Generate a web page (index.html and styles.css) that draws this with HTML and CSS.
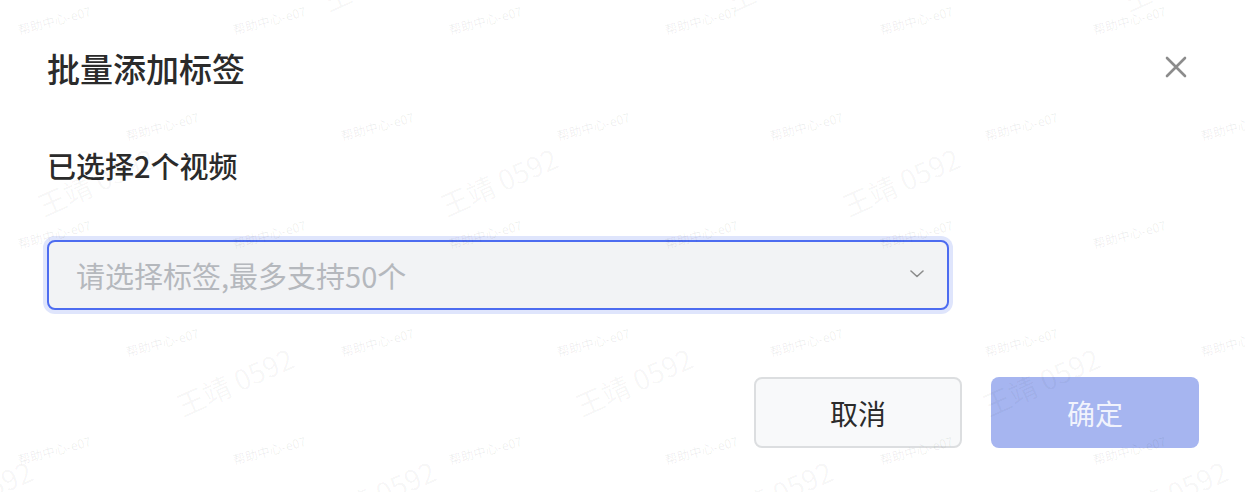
FILE: index.html
```html
<!DOCTYPE html>
<html lang="zh-CN">
<head>
<meta charset="utf-8">
<title>批量添加标签</title>
<link rel="stylesheet" href="styles.css">
</head>
<body>
<div class="dialog">
  <div class="dialog-header">
    <h2 class="dialog-title">批量添加标签</h2>
    <button class="close-btn" type="button" aria-label="关闭">
      <svg width="22" height="22" viewBox="0 0 22 22"><path d="M2 2 L20 20 M20 2 L2 20" stroke="#8c8c8c" stroke-width="2.6" stroke-linecap="round" fill="none"/></svg>
    </button>
  </div>
  <div class="dialog-body">
    <p class="selected-count">已选择2个视频</p>
    <div class="select">
      <span class="select-placeholder">请选择标签,最多支持50个</span>
      <svg class="select-arrow" width="14" height="8" viewBox="0 0 14 8"><path d="M1 1 L7 6.5 L13 1" stroke="#8c8c8c" stroke-width="1.6" fill="none" stroke-linecap="round" stroke-linejoin="round"/></svg>
    </div>
  </div>
  <div class="dialog-footer">
    <button class="btn btn-cancel" type="button">取消</button>
    <button class="btn btn-primary" type="button" disabled>确定</button>
  </div>
</div>

<div class="watermarks" aria-hidden="true">
  <span class="wm-s" style="left:20px;top:23px">帮助中心-e07</span>
  <span class="wm-s" style="left:235px;top:23px">帮助中心-e07</span>
  <span class="wm-s" style="left:451px;top:23px">帮助中心-e07</span>
  <span class="wm-s" style="left:667px;top:23px">帮助中心-e07</span>
  <span class="wm-s" style="left:882px;top:23px">帮助中心-e07</span>
  <span class="wm-s" style="left:1095px;top:23px">帮助中心-e07</span>

  <span class="wm-s" style="left:128px;top:129px">帮助中心-e07</span>
  <span class="wm-s" style="left:343px;top:129px">帮助中心-e07</span>
  <span class="wm-s" style="left:559px;top:129px">帮助中心-e07</span>
  <span class="wm-s" style="left:772px;top:129px">帮助中心-e07</span>
  <span class="wm-s" style="left:987px;top:129px">帮助中心-e07</span>
  <span class="wm-s" style="left:1203px;top:129px">帮助中心-e07</span>

  <span class="wm-s" style="left:20px;top:237px">帮助中心-e07</span>
  <span class="wm-s" style="left:235px;top:237px">帮助中心-e07</span>
  <span class="wm-s" style="left:451px;top:237px">帮助中心-e07</span>
  <span class="wm-s" style="left:667px;top:237px">帮助中心-e07</span>
  <span class="wm-s" style="left:882px;top:237px">帮助中心-e07</span>
  <span class="wm-s" style="left:1095px;top:237px">帮助中心-e07</span>

  <span class="wm-s" style="left:128px;top:345px">帮助中心-e07</span>
  <span class="wm-s" style="left:343px;top:345px">帮助中心-e07</span>
  <span class="wm-s" style="left:559px;top:345px">帮助中心-e07</span>
  <span class="wm-s" style="left:772px;top:345px">帮助中心-e07</span>
  <span class="wm-s" style="left:987px;top:345px">帮助中心-e07</span>
  <span class="wm-s" style="left:1203px;top:345px">帮助中心-e07</span>

  <span class="wm-s" style="left:20px;top:453px">帮助中心-e07</span>
  <span class="wm-s" style="left:235px;top:453px">帮助中心-e07</span>
  <span class="wm-s" style="left:451px;top:453px">帮助中心-e07</span>
  <span class="wm-s" style="left:667px;top:453px">帮助中心-e07</span>
  <span class="wm-s" style="left:882px;top:453px">帮助中心-e07</span>
  <span class="wm-s" style="left:1095px;top:453px">帮助中心-e07</span>

  <span class="wm-l" style="left:330px;top:-15px">王靖 0592</span>
  <span class="wm-l" style="left:734px;top:-15px">王靖 0592</span>
  <span class="wm-l" style="left:1130px;top:-15px">王靖 0592</span>

  <span class="wm-l" style="left:45px;top:190px">王靖 0592</span>
  <span class="wm-l" style="left:448px;top:190px">王靖 0592</span>
  <span class="wm-l" style="left:850px;top:190px">王靖 0592</span>

  <span class="wm-l" style="left:184px;top:390px">王靖 0592</span>
  <span class="wm-l" style="left:583px;top:390px">王靖 0592</span>
  <span class="wm-l" style="left:990px;top:390px">王靖 0592</span>

  <span class="wm-l" style="left:-77px;top:503px">王靖 0592</span>
  <span class="wm-l" style="left:326px;top:503px">王靖 0592</span>
  <span class="wm-l" style="left:723px;top:503px">王靖 0592</span>
  <span class="wm-l" style="left:1118px;top:503px">王靖 0592</span>
</div>
</body>
</html>
```

FILE: styles.css
```css
* {
  box-sizing: border-box;
}

html, body {
  margin: 0;
  padding: 0;
  background: #ffffff;
}

body {
  font-family: "Noto Sans CJK SC", "Noto Sans", "Liberation Sans", sans-serif;
  color: #2b2b2b;
  width: 1245px;
  height: 492px;
  overflow: hidden;
  position: relative;
}

.dialog {
  padding: 46px 46px 0 47px;
}

.dialog-header {
  display: flex;
  align-items: center;
  justify-content: space-between;
  height: 44px;
}

.dialog-title {
  margin: 0;
  font-size: 33px;
  line-height: 44px;
  font-weight: 500;
  color: #2b2b2b;
}

.close-btn {
  width: 22px;
  height: 22px;
  padding: 0;
  margin: -2px 12px 0 0;
  border: none;
  background: transparent;
  display: flex;
  align-items: center;
  justify-content: center;
  cursor: pointer;
}

.dialog-body {
  display: flex;
  flex-direction: column;
}

.selected-count {
  margin: 55px 0 0 0;
  font-size: 29px;
  line-height: 40px;
  font-weight: 500;
  color: #2b2b2b;
}

.select {
  margin-top: 55px;
  width: 902px;
  height: 70px;
  border: 2px solid #4d6cf0;
  border-radius: 8px;
  background: #f2f3f5;
  box-shadow: 0 0 0 4px #dfe5fc;
  display: flex;
  align-items: center;
  justify-content: space-between;
  padding: 0 23px 0 27px;
}

.select-placeholder {
  font-size: 29px;
  line-height: 40px;
  color: #b5b8bd;
}

.select-arrow {
  margin-top: -2px;
}

.dialog-footer {
  display: flex;
  justify-content: flex-end;
  gap: 29px;
  margin-top: 67px;
}

.btn {
  width: 208px;
  height: 71px;
  border-radius: 8px;
  font-family: inherit;
  font-size: 28px;
  line-height: 40px;
  padding: 0;
  cursor: pointer;
}

.btn-cancel {
  background: #f8f9fa;
  border: 2px solid #dcdee0;
  color: #2b2b2b;
}

.btn-primary {
  background: #a6b5f0;
  border: none;
  color: rgba(255, 255, 255, 0.85);
}

.watermarks {
  position: absolute;
  inset: 0;
  overflow: hidden;
  pointer-events: none;
  z-index: 10;
}

.wm-s,
.wm-l {
  position: absolute;
  white-space: nowrap;
  transform-origin: 0 100%;
  font-family: "Noto Sans CJK SC", "Liberation Sans", sans-serif;
}

.wm-s {
  font-size: 12.5px;
  line-height: 14px;
  color: rgba(0, 0, 0, 0.07);
  transform: rotate(-15deg);
}

.wm-l {
  font-size: 28px;
  line-height: 30px;
  color: rgba(0, 0, 0, 0.04);
  transform: rotate(-24deg);
}
```
